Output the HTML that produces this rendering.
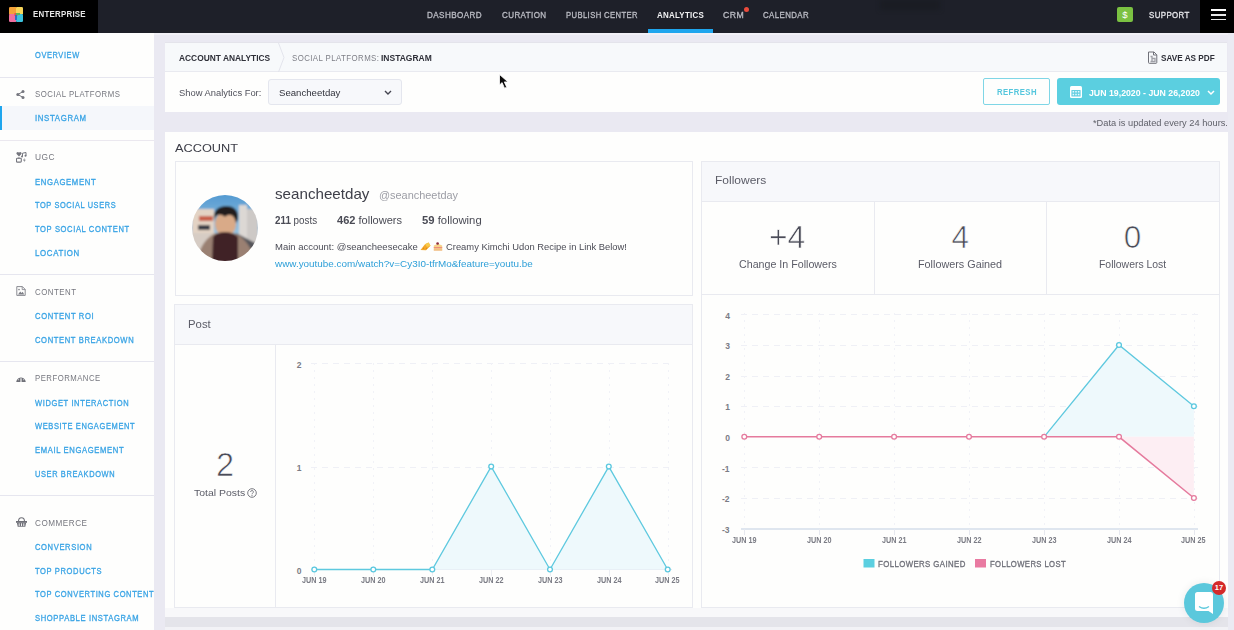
<!DOCTYPE html>
<html><head><meta charset="utf-8">
<style>
*{margin:0;padding:0;box-sizing:border-box}
html,body{width:1234px;height:630px;overflow:hidden;background:#eae9f2;font-family:"Liberation Sans",sans-serif}
.a{position:absolute}
.t{position:absolute;white-space:nowrap;transform-origin:0 0;font-family:"Liberation Sans",sans-serif}
.t b{font-weight:700}
</style></head><body>
<!-- top bar -->
<div class="a" style="left:0;top:0;width:1234px;height:33px;background:#1e2029"></div>
<div class="a" style="left:0;top:0;width:98px;height:33px;background:#000"></div>
<div class="a" style="left:1200px;top:0;width:34px;height:33px;background:#000"></div>
<!-- logo -->
<svg class="a" style="left:9px;top:7px" width="15" height="15" viewBox="0 0 15 15">
<rect x="0" y="0" width="8" height="8" rx="1.2" fill="#f4a23a"/>
<rect x="7" y="0" width="7" height="7.5" rx="1.2" fill="#f7d65a"/>
<rect x="0" y="7" width="7.5" height="8" rx="1.2" fill="#ef6fa0"/>
<rect x="7" y="7" width="7" height="8" rx="1.2" fill="#3cc3de"/>
<rect x="5.5" y="6" width="3" height="3" fill="#e2524b"/>
<rect x="7" y="6" width="4" height="2" fill="#57b957"/>
<rect x="6" y="8" width="2" height="5" fill="#2f6fc4"/>
</svg>
<!-- underline + red dot -->
<div class="a" style="left:648px;top:29px;width:65px;height:4px;background:#1fa6ee"></div>
<div class="a" style="left:744px;top:7px;width:5px;height:5px;border-radius:50%;background:#ea4b3c"></div>
<!-- green $ -->
<div class="a" style="left:1117px;top:7px;width:16px;height:15px;border-radius:2px;background:#7bc142;color:#fff;font-size:9.5px;line-height:15px;text-align:center;font-weight:400">$</div>
<!-- hamburger -->
<div class="a" style="left:1211px;top:9px;width:15px;height:2px;background:#fff"></div>
<div class="a" style="left:1211px;top:14px;width:15px;height:1.6px;background:#e8e8e8"></div>
<div class="a" style="left:1211px;top:18.6px;width:15px;height:1.6px;background:#e8e8e8"></div>

<!-- sidebar -->
<div class="a" style="left:0;top:33px;width:154px;height:597px;background:#fefefd"></div>
<div class="a" style="left:0;top:106px;width:154px;height:24px;background:#f5f7fb"></div>
<div class="a" style="left:0;top:106px;width:2px;height:24px;background:#1fa6ee"></div>
<div class="a" style="left:0;top:77px;width:154px;height:1px;background:#e6e6ef"></div>
<div class="a" style="left:0;top:140px;width:154px;height:1px;background:#ebe8ef"></div>
<div class="a" style="left:0;top:274px;width:154px;height:1px;background:#e6e6ef"></div>
<div class="a" style="left:0;top:361px;width:154px;height:1px;background:#e6e6ef"></div>
<div class="a" style="left:0;top:495px;width:154px;height:1px;background:#e6e6ef"></div>
<!-- sidebar icons -->
<svg class="a" style="left:16px;top:89.5px" width="9" height="9" viewBox="0 0 9 9">
<circle cx="1.8" cy="4.5" r="1.5" fill="#75767e"/><circle cx="7" cy="1.6" r="1.5" fill="#75767e"/><circle cx="7" cy="7.4" r="1.5" fill="#75767e"/>
<path d="M1.8 4.5L7 1.6M1.8 4.5L7 7.4" stroke="#75767e" stroke-width="1"/></svg>
<svg class="a" style="left:16px;top:151.5px" width="11" height="11" viewBox="0 0 11 11">
<path d="M3 4.5L.6 2.1A1.2 1.2 0 0 1 3 .8a1.2 1.2 0 0 1 2.4 1.3z" fill="#75767e"/>
<path d="M6.5 4.3V1.2L10 .5v3.2" fill="none" stroke="#75767e" stroke-width="1"/><circle cx="6" cy="4.4" r="1" fill="#75767e"/><circle cx="9.5" cy="3.7" r="1" fill="#75767e"/>
<rect x=".5" y="6.3" width="4.8" height="3.8" rx=".8" fill="none" stroke="#75767e" stroke-width="1.1"/><rect x="1.8" y="5.6" width="2" height="1" fill="#75767e"/>
<path d="M8.5 6L7 8.4h1.5L7.8 10.5 9.8 7.8H8.4z" fill="#75767e"/></svg>
<svg class="a" style="left:15.5px;top:285.5px" width="10" height="10" viewBox="0 0 10 10">
<path d="M.8.6h5.6L9.2 3.4v6H.8z" fill="none" stroke="#7d7e86" stroke-width=".9"/><path d="M6.2.6v3h3" fill="none" stroke="#7d7e86" stroke-width=".8"/>
<path d="M2 8.4l2.2-3 1.3 1.5 1.2-1.2 1.5 2.7z" fill="#7d7e86"/><circle cx="3" cy="3.6" r=".8" fill="#7d7e86"/></svg>
<svg class="a" style="left:16px;top:373.5px" width="10" height="8.5" viewBox="0 0 10 8.5">
<path d="M.2 8.3A4.8 4.8 0 0 1 9.8 8.3z" fill="#6f7078"/>
<path d="M5 8V4.2" stroke="#fff" stroke-width="1.1"/><path d="M2 5.4l.9.6M5 2.1v1M8 5.4l-.9.6M3.2 3l.5.7M6.8 3l-.5.7" stroke="#fff" stroke-width=".7"/></svg>
<svg class="a" style="left:16px;top:516.5px" width="11" height="10" viewBox="0 0 11 10">
<path d="M2.5 4.5C2.5 1.6 3.5 .8 5.5.8s3 .8 3 3.7" fill="none" stroke="#6f7078" stroke-width="1.1"/>
<rect x="0" y="4" width="11" height="1.8" fill="#6f7078"/><path d="M.9 5.8h9.2L9.3 9.8H1.7z" fill="#6f7078"/>
<path d="M3.2 6.3v2.8M5.5 6.3v2.8M7.8 6.3v2.8" stroke="#fff" stroke-width=".9"/></svg>

<!-- breadcrumb card -->
<div class="a" style="left:154px;top:33px;width:1080px;height:2px;background:#f1f0f6"></div>
<div class="a" style="left:165px;top:42px;width:1062px;height:1px;background:#e4e4eb"></div>
<div class="a" style="left:880px;top:0;width:60px;height:10px;background:#1a1c23;filter:blur(2px)"></div>
<div class="a" style="left:165px;top:43px;width:1062px;height:69px;background:#fefefd"></div>
<div class="a" style="left:165px;top:43px;width:1062px;height:28.5px;background:#f7f9fb;border-bottom:1px solid #e9eaf0"></div>
<svg class="a" style="left:277px;top:43px" width="10" height="29" viewBox="0 0 10 29"><path d="M1.5 0L7 14.5L1.5 29" fill="none" stroke="#e3e4ec" stroke-width="1"/></svg>
<!-- pdf icon -->
<svg class="a" style="left:1146.5px;top:50.5px" width="11" height="13" viewBox="0 0 11 13" fill="none" stroke="#707179" stroke-width="1">
<path d="M1.5 1h5.5l2.8 2.8V11.5a.8.8 0 0 1-.8.8H2.3a.8.8 0 0 1-.8-.8z"/><path d="M3.5 5.5h1.5v5M5 7.5h3v3H3.5" stroke-width="1.3" stroke="#9fa0a7"/><path d="M6.5 1v3h3.3"/></svg>
<!-- dropdown -->
<div class="a" style="left:268px;top:78.5px;width:134px;height:26px;background:#f7f8fb;border:1px solid #e4e6ee;border-radius:3px"></div>
<svg class="a" style="left:383.5px;top:89.5px" width="8" height="5" viewBox="0 0 8 5"><path d="M1 1l3 3 3-3" fill="none" stroke="#444550" stroke-width="1.4"/></svg>
<!-- refresh -->
<div class="a" style="left:983px;top:78px;width:67px;height:27px;border:1px solid #7fd6e6;border-radius:2px;background:#fefefd"></div>
<!-- date -->
<div class="a" style="left:1057px;top:78px;width:163px;height:27px;background:#5bcfe0;border-radius:3px"></div>
<svg class="a" style="left:1070px;top:86px" width="12" height="12" viewBox="0 0 12 12">
<rect x="0" y="0" width="12" height="12" rx="1.5" fill="#fff"/><rect x="1.4" y="4" width="9.2" height="6.6" rx=".6" fill="#64cfe1"/>
<g fill="#e8fbff"><rect x="2.6" y="5" width="1.5" height="1.5"/><rect x="5.25" y="5" width="1.5" height="1.5"/><rect x="7.9" y="5" width="1.5" height="1.5"/><rect x="2.6" y="7.8" width="1.5" height="1.5"/><rect x="5.25" y="7.8" width="1.5" height="1.5"/><rect x="7.9" y="7.8" width="1.5" height="1.5"/></g></svg>
<svg class="a" style="left:1206.5px;top:89.5px" width="8" height="6" viewBox="0 0 8 6"><path d="M1 1l3 3 3-3" fill="none" stroke="#fff" stroke-width="1.5"/></svg>

<!-- account card -->
<div class="a" style="left:165px;top:132px;width:1063px;height:485px;background:#fefefd"></div>
<div class="a" style="left:1228px;top:33px;width:6px;height:597px;background:#ebebf3"></div>
<!-- bottom band -->
<div class="a" style="left:165px;top:608px;width:1063px;height:9px;background:#f8f8fa"></div>
<div class="a" style="left:165px;top:617px;width:1063px;height:10px;background:#e4e4ea"></div>
<div class="a" style="left:165px;top:627px;width:1063px;height:3px;background:#f2f2f6"></div>
<!-- profile box -->
<div class="a" style="left:175px;top:161px;width:518px;height:135px;border:1px solid #e9eaf0"></div>
<!-- avatar -->
<svg class="a" style="left:192px;top:195px" width="66" height="66" viewBox="0 0 66 66">
<defs><clipPath id="cp"><circle cx="33" cy="33" r="33"/></clipPath>
<filter id="bl" x="-10%" y="-10%" width="120%" height="120%"><feGaussianBlur stdDeviation="1"/></filter><linearGradient id="sky" x1="0" y1="0" x2="0" y2="1"><stop offset="0" stop-color="#4f97d0"/><stop offset=".6" stop-color="#9cc6e2"/></linearGradient></defs>
<g clip-path="url(#cp)"><g filter="url(#bl)">
<rect x="-3" y="-3" width="72" height="72" fill="url(#sky)"/>
<rect x="0" y="14" width="22" height="40" fill="#e3d3c4"/>
<rect x="7" y="21" width="14" height="5" fill="#c8604c"/>
<rect x="6" y="30" width="12" height="5" fill="#3b3c46"/>
<rect x="-3" y="38" width="27" height="31" fill="#d6ccc4"/>
<rect x="47" y="10" width="8" height="40" fill="#dcd8d4"/>
<rect x="55" y="14" width="11" height="40" fill="#cdc9c6"/>
<path d="M44 38l25 13v18H44z" fill="#55545a"/>
<path d="M4 69c3-16 10-27 20-31h18c10 4 18 14 22 31z" fill="#9a8072"/>
<ellipse cx="33.5" cy="29" rx="10.5" ry="12" fill="#d9aa88"/>
<path d="M22 24c-1-10 6-13 12-13 8 0 13 4 12 13l-2 4c-1-5-3-8-6-8-4 0-5 2-5 2s-3-3-7-2c-3 1-4 4-4 7z" fill="#221b1e"/>
<path d="M21 42c3-4 8-5 12-5s9 1 13 5v26H20z" fill="#3f2226"/>
</g></g></svg>
<!-- emojis -->
<svg class="a" style="left:420px;top:241.5px" width="11" height="9" viewBox="0 0 11 9"><path d="M.5 8L5 2.2 8.6.6 10.5 3.8 6 8.2z" fill="#f3a72a"/><path d="M5 2.2L8.6.6 10.5 3.8 7 5z" fill="#f7c94a"/><circle cx="3.5" cy="6.3" r=".7" fill="#e08a12"/><circle cx="6.5" cy="6.5" r=".7" fill="#e08a12"/></svg>
<svg class="a" style="left:432.5px;top:242px" width="10" height="9" viewBox="0 0 10 9"><path d="M.8 3.5L5 1.8 9.2 3.5v5H.8z" fill="#f6d28a"/><path d="M.8 5h8.4v1.2H.8z" fill="#ef8f7c"/><path d="M.8 7.5h8.4v1H.8z" fill="#eeb07a"/><circle cx="4.6" cy="1.5" r="1.3" fill="#8c2a3a"/></svg>
<!-- followers panel -->
<div class="a" style="left:701px;top:161px;width:519px;height:447px;border:1px solid #e9eaf0;background:#fefefd"></div>
<div class="a" style="left:702px;top:162px;width:517px;height:40px;background:#f7f8fb;border-bottom:1px solid #e9eaf0"></div>
<div class="a" style="left:702px;top:294px;width:517px;height:1px;background:#e9eaf0"></div>
<div class="a" style="left:874px;top:202px;width:1px;height:92px;background:#e9eaf0"></div>
<div class="a" style="left:1046px;top:202px;width:1px;height:92px;background:#e9eaf0"></div>

<!-- post card -->
<div class="a" style="left:174px;top:304px;width:519px;height:304px;border:1px solid #e9eaf0;background:#fefefd"></div>
<div class="a" style="left:175px;top:305px;width:517px;height:40px;background:#f7f8fb;border-bottom:1px solid #e9eaf0"></div>
<div class="a" style="left:275px;top:345px;width:1px;height:262px;background:#e9eaf0"></div>
<svg class="a" style="left:246.5px;top:487.5px" width="10" height="10" viewBox="0 0 10 10"><circle cx="5" cy="5" r="4.3" fill="none" stroke="#6a6b74" stroke-width=".9"/><path d="M3.6 3.9a1.4 1.4 0 1 1 2 1.3c-.5.3-.6.5-.6 1.1" fill="none" stroke="#6a6b74" stroke-width=".9"/><circle cx="5" cy="7.6" r=".55" fill="#6a6b74"/></svg>

<!-- charts -->
<svg class="a" style="left:0;top:0" width="1234" height="630" viewBox="0 0 1234 630">
<g stroke="#eff0f6" stroke-width="1" stroke-dasharray="6 5" fill="none">
<path d="M311 363.5H672M311 467.5H672"/>
<path d="M741 314.5H1198M741 345.5H1198M741 376.5H1198M741 406.5H1198M741 467.5H1198M741 498.5H1198"/>
</g>
<g stroke="#f1f2f7" stroke-width="1" stroke-dasharray="2 5" fill="none">
<path d="M314.5 363V572M373.5 363V572M432.5 363V572M491.5 363V572M550.5 363V572M609.5 363V572M668.5 363V572"/>
<path d="M744.5 313V531M819.5 313V531M894.5 313V531M969.5 313V531M1044.5 313V531M1119.5 313V531M1194.5 313V531"/>
</g>
<path d="M311 569.5H672" stroke="#e3e7f0" stroke-width="1"/>
<path d="M741 529H1198" stroke="#dfe6ef" stroke-width="2"/>
<path d="M744.5 529V535M819.5 529V535M894.5 529V535M969.5 529V535M1044.5 529V535M1119.5 529V535M1194.5 529V535" stroke="#e6e8ef" stroke-width="1"/>
<path d="M314.5 570V576M373.5 570V576M432.5 570V576M491.5 570V576M550.5 570V576M609.5 570V576M668.5 570V576" stroke="#eceef3" stroke-width="1"/>
<!-- post area -->
<path d="M432.3 569.5L491.2 466.6L550 569.5L608.8 466.6L667.7 569.5Z" fill="#eef9fc"/>
<polyline points="314.3,569.5 373.3,569.5 432.3,569.5 491.2,466.6 550,569.5 608.8,466.6 667.7,569.5" fill="none" stroke="#5ec9df" stroke-width="1.3"/>
<g fill="#fff" stroke="#5bc8df" stroke-width="1.3">
<circle cx="314.3" cy="569.5" r="2.4"/><circle cx="373.3" cy="569.5" r="2.4"/><circle cx="432.3" cy="569.5" r="2.4"/><circle cx="491.2" cy="466.6" r="2.4"/><circle cx="550" cy="569.5" r="2.4"/><circle cx="608.8" cy="466.6" r="2.4"/><circle cx="667.7" cy="569.5" r="2.4"/></g>
<!-- follower areas -->
<path d="M1044.1 436.8L1119 345L1193.9 406.2V436.8Z" fill="#eef9fc"/>
<path d="M1119 436.8L1193.9 498V436.8Z" fill="#fdeef3"/>
<polyline points="1044.1,436.8 1119,345 1193.9,406.2" fill="none" stroke="#5ec9df" stroke-width="1.3"/>
<polyline points="744.3,436.8 819.2,436.8 894.1,436.8 969,436.8 1044.1,436.8 1119,436.8 1193.9,498" fill="none" stroke="#e57a9d" stroke-width="1.5"/>
<g fill="#fff" stroke="#5bc8df" stroke-width="1.3"><circle cx="1119" cy="345" r="2.4"/><circle cx="1193.9" cy="406.2" r="2.4"/></g>
<g fill="#fff" stroke="#e57a9d" stroke-width="1.3">
<circle cx="744.3" cy="436.8" r="2.4"/><circle cx="819.2" cy="436.8" r="2.4"/><circle cx="894.1" cy="436.8" r="2.4"/><circle cx="969" cy="436.8" r="2.4"/><circle cx="1044.1" cy="436.8" r="2.4"/><circle cx="1119" cy="436.8" r="2.4"/><circle cx="1193.9" cy="498" r="2.4"/></g>
<rect x="863.5" y="559" width="11" height="8.5" fill="#5bcfe0"/>
<rect x="975" y="559" width="11" height="8.5" fill="#e97aa1"/>
</svg>

<span class='t' style='left:32.7px;top:9.0px;font-size:9.6px;line-height:9.6px;font-weight:700;color:#e6e6e6;letter-spacing:0.3px;transform:scaleX(0.8222);'>ENTERPRISE</span>
<span class='t' style='left:427.3px;top:10.0px;font-size:9.5px;line-height:9.5px;font-weight:400;color:#b9bac2;letter-spacing:0.5px;transform:scaleX(0.8514);-webkit-text-stroke:0.35px currentColor;'>DASHBOARD</span>
<span class='t' style='left:501.5px;top:10.0px;font-size:9.5px;line-height:9.5px;font-weight:400;color:#b9bac2;letter-spacing:0.5px;transform:scaleX(0.8423);-webkit-text-stroke:0.35px currentColor;'>CURATION</span>
<span class='t' style='left:565.7px;top:10.0px;font-size:9.5px;line-height:9.5px;font-weight:400;color:#b9bac2;letter-spacing:0.5px;transform:scaleX(0.8059);-webkit-text-stroke:0.35px currentColor;'>PUBLISH CENTER</span>
<span class='t' style='left:656.8px;top:10.0px;font-size:9.5px;line-height:9.5px;font-weight:700;color:#f2f2f4;letter-spacing:0.3px;transform:scaleX(0.8360);'>ANALYTICS</span>
<span class='t' style='left:722.6px;top:10.0px;font-size:9.5px;line-height:9.5px;font-weight:400;color:#b9bac2;letter-spacing:0.5px;transform:scaleX(0.9141);-webkit-text-stroke:0.35px currentColor;'>CRM</span>
<span class='t' style='left:763.0px;top:10.0px;font-size:9.5px;line-height:9.5px;font-weight:400;color:#b9bac2;letter-spacing:0.5px;transform:scaleX(0.8258);-webkit-text-stroke:0.35px currentColor;'>CALENDAR</span>
<span class='t' style='left:1149.4px;top:10.0px;font-size:9.5px;line-height:9.5px;font-weight:400;color:#e4e4e8;letter-spacing:0.5px;transform:scaleX(0.8270);-webkit-text-stroke:0.35px currentColor;'>SUPPORT</span>
<span class='t' style='left:34.7px;top:89.0px;font-size:9.5px;line-height:9.5px;font-weight:400;color:#76777f;letter-spacing:0.6px;transform:scaleX(0.8206);'>SOCIAL PLATFORMS</span>
<span class='t' style='left:34.7px;top:152.0px;font-size:9.5px;line-height:9.5px;font-weight:400;color:#76777f;letter-spacing:0.6px;transform:scaleX(0.8812);'>UGC</span>
<span class='t' style='left:34.7px;top:287.0px;font-size:9.5px;line-height:9.5px;font-weight:400;color:#76777f;letter-spacing:0.6px;transform:scaleX(0.8285);'>CONTENT</span>
<span class='t' style='left:34.7px;top:373.0px;font-size:9.5px;line-height:9.5px;font-weight:400;color:#76777f;letter-spacing:0.6px;transform:scaleX(0.8163);'>PERFORMANCE</span>
<span class='t' style='left:34.7px;top:518.0px;font-size:9.5px;line-height:9.5px;font-weight:400;color:#76777f;letter-spacing:0.6px;transform:scaleX(0.8578);'>COMMERCE</span>
<span class='t' style='left:34.7px;top:50.0px;font-size:9.5px;line-height:9.5px;font-weight:400;color:#3aa4e5;letter-spacing:0.8px;transform:scaleX(0.7803);-webkit-text-stroke:0.35px currentColor;'>OVERVIEW</span>
<span class='t' style='left:34.7px;top:113.0px;font-size:9.5px;line-height:9.5px;font-weight:400;color:#3aa4e5;letter-spacing:0.8px;transform:scaleX(0.8205);-webkit-text-stroke:0.35px currentColor;'>INSTAGRAM</span>
<span class='t' style='left:34.7px;top:177.0px;font-size:9.5px;line-height:9.5px;font-weight:400;color:#3aa4e5;letter-spacing:0.8px;transform:scaleX(0.8108);-webkit-text-stroke:0.35px currentColor;'>ENGAGEMENT</span>
<span class='t' style='left:34.7px;top:200.0px;font-size:9.5px;line-height:9.5px;font-weight:400;color:#3aa4e5;letter-spacing:0.8px;transform:scaleX(0.7772);-webkit-text-stroke:0.35px currentColor;'>TOP SOCIAL USERS</span>
<span class='t' style='left:34.7px;top:224.0px;font-size:9.5px;line-height:9.5px;font-weight:400;color:#3aa4e5;letter-spacing:0.8px;transform:scaleX(0.7951);-webkit-text-stroke:0.35px currentColor;'>TOP SOCIAL CONTENT</span>
<span class='t' style='left:34.7px;top:248.0px;font-size:9.5px;line-height:9.5px;font-weight:400;color:#3aa4e5;letter-spacing:0.8px;transform:scaleX(0.8272);-webkit-text-stroke:0.35px currentColor;'>LOCATION</span>
<span class='t' style='left:34.7px;top:311.0px;font-size:9.5px;line-height:9.5px;font-weight:400;color:#3aa4e5;letter-spacing:0.8px;transform:scaleX(0.7998);-webkit-text-stroke:0.35px currentColor;'>CONTENT ROI</span>
<span class='t' style='left:34.7px;top:335.0px;font-size:9.5px;line-height:9.5px;font-weight:400;color:#3aa4e5;letter-spacing:0.8px;transform:scaleX(0.7987);-webkit-text-stroke:0.35px currentColor;'>CONTENT BREAKDOWN</span>
<span class='t' style='left:34.7px;top:398.0px;font-size:9.5px;line-height:9.5px;font-weight:400;color:#3aa4e5;letter-spacing:0.8px;transform:scaleX(0.7901);-webkit-text-stroke:0.35px currentColor;'>WIDGET INTERACTION</span>
<span class='t' style='left:34.7px;top:421.0px;font-size:9.5px;line-height:9.5px;font-weight:400;color:#3aa4e5;letter-spacing:0.8px;transform:scaleX(0.7870);-webkit-text-stroke:0.35px currentColor;'>WEBSITE ENGAGEMENT</span>
<span class='t' style='left:34.7px;top:445.0px;font-size:9.5px;line-height:9.5px;font-weight:400;color:#3aa4e5;letter-spacing:0.8px;transform:scaleX(0.8028);-webkit-text-stroke:0.35px currentColor;'>EMAIL ENGAGEMENT</span>
<span class='t' style='left:34.7px;top:469.0px;font-size:9.5px;line-height:9.5px;font-weight:400;color:#3aa4e5;letter-spacing:0.8px;transform:scaleX(0.7824);-webkit-text-stroke:0.35px currentColor;'>USER BREAKDOWN</span>
<span class='t' style='left:34.7px;top:542.0px;font-size:9.5px;line-height:9.5px;font-weight:400;color:#3aa4e5;letter-spacing:0.8px;transform:scaleX(0.7964);-webkit-text-stroke:0.35px currentColor;'>CONVERSION</span>
<span class='t' style='left:34.7px;top:566.0px;font-size:9.5px;line-height:9.5px;font-weight:400;color:#3aa4e5;letter-spacing:0.8px;transform:scaleX(0.7935);-webkit-text-stroke:0.35px currentColor;'>TOP PRODUCTS</span>
<span class='t' style='left:34.7px;top:589.0px;font-size:9.5px;line-height:9.5px;font-weight:400;color:#3aa4e5;letter-spacing:0.8px;transform:scaleX(0.7888);-webkit-text-stroke:0.35px currentColor;'>TOP CONVERTING CONTENT</span>
<span class='t' style='left:34.7px;top:613.0px;font-size:9.5px;line-height:9.5px;font-weight:400;color:#3aa4e5;letter-spacing:0.8px;transform:scaleX(0.7990);-webkit-text-stroke:0.35px currentColor;'>SHOPPABLE INSTAGRAM</span>
<span class='t' style='left:179.3px;top:53.0px;font-size:9.5px;line-height:9.5px;font-weight:700;color:#2e2f38;letter-spacing:0px;transform:scaleX(0.8827);'>ACCOUNT ANALYTICS</span>
<span class='t' style='left:291.5px;top:53.0px;font-size:9.5px;line-height:9.5px;font-weight:400;color:#7e7f87;letter-spacing:0.5px;transform:scaleX(0.8268);'>SOCIAL PLATFORMS:</span>
<span class='t' style='left:381.0px;top:53.0px;font-size:9.5px;line-height:9.5px;font-weight:700;color:#2e2f38;letter-spacing:0px;transform:scaleX(0.8936);'>INSTAGRAM</span>
<span class='t' style='left:1160.7px;top:53.0px;font-size:9.5px;line-height:9.5px;font-weight:700;color:#2e2f38;letter-spacing:0px;transform:scaleX(0.8613);'>SAVE AS PDF</span>
<span class='t' style='left:179.2px;top:89.0px;font-size:8.5px;line-height:8.5px;font-weight:400;color:#50515b;letter-spacing:0px;transform:scaleX(1.1033);'>Show Analytics For:</span>
<span class='t' style='left:279.2px;top:89.0px;font-size:8.6px;line-height:8.6px;font-weight:400;color:#31323b;letter-spacing:0px;transform:scaleX(1.1167);'>Seancheetday</span>
<span class='t' style='left:996.8px;top:87.0px;font-size:9.5px;line-height:9.5px;font-weight:700;color:#55c6dd;letter-spacing:0.5px;transform:scaleX(0.8164);'>REFRESH</span>
<span class='t' style='left:1089.1px;top:88.0px;font-size:9.5px;line-height:9.5px;font-weight:700;color:#ffffff;letter-spacing:0px;transform:scaleX(0.9218);'>JUN 19,2020 - JUN 26,2020</span>
<span class='t' style='left:1092.8px;top:119.0px;font-size:9px;line-height:9px;font-weight:400;color:#60616a;letter-spacing:0px;transform:scaleX(1.0293);'>*Data is updated every 24 hours.</span>
<span class='t' style='left:174.9px;top:143.0px;font-size:11.2px;line-height:11.2px;font-weight:400;color:#3c3d47;letter-spacing:0px;transform:scaleX(1.1390);'>ACCOUNT</span>
<span class='t' style='left:275.0px;top:186.0px;font-size:15px;line-height:15px;font-weight:400;color:#3f404a;letter-spacing:0px;transform:scaleX(1.0108);'>seancheetday</span>
<span class='t' style='left:379.0px;top:190.0px;font-size:10.5px;line-height:10.5px;font-weight:400;color:#9c9da5;letter-spacing:0px;transform:scaleX(1.0398);'>@seancheetday</span>
<span class='t' style='left:275.2px;top:216.0px;font-size:10px;line-height:10px;font-weight:400;color:#4a4b55;letter-spacing:0px;transform:scaleX(0.9827);'><b>211</b> posts</span>
<span class='t' style='left:337.4px;top:216.0px;font-size:10px;line-height:10px;font-weight:400;color:#4a4b55;letter-spacing:0px;transform:scaleX(1.1043);'><b>462</b> followers</span>
<span class='t' style='left:422.4px;top:216.0px;font-size:10px;line-height:10px;font-weight:400;color:#4a4b55;letter-spacing:0px;transform:scaleX(1.1302);'><b>59</b> following</span>
<span class='t' style='left:275.0px;top:243.0px;font-size:8.6px;line-height:8.6px;font-weight:400;color:#4b4c56;letter-spacing:0px;transform:scaleX(1.1056);'>Main account: @seancheesecake</span>
<span class='t' style='left:445.6px;top:243.0px;font-size:8.6px;line-height:8.6px;font-weight:400;color:#4b4c56;letter-spacing:0px;transform:scaleX(1.0917);'>Creamy Kimchi Udon Recipe in Link Below!</span>
<span class='t' style='left:275.0px;top:260.0px;font-size:8.6px;line-height:8.6px;font-weight:400;color:#2d9fd8;letter-spacing:0px;transform:scaleX(1.1507);'>www.youtube.com/watch?v=Cy3I0-tfrMo&amp;feature=youtu.be</span>
<span class='t' style='left:715.1px;top:175.0px;font-size:11px;line-height:11px;font-weight:400;color:#5b5c67;letter-spacing:0px;transform:scaleX(1.0910);'>Followers</span>
<span class='t' style='left:769.4px;top:222.0px;font-size:31.5px;line-height:31.5px;font-weight:400;color:#4b4c58;letter-spacing:0px;transform:scaleX(1.0089);-webkit-text-stroke:0.7px #fefefd;'>+4</span>
<span class='t' style='left:951.6px;top:222.0px;font-size:31.5px;line-height:31.5px;font-weight:400;color:#4b4c58;letter-spacing:0px;-webkit-text-stroke:0.7px #fefefd;'>4</span>
<span class='t' style='left:1123.7px;top:222.0px;font-size:31.5px;line-height:31.5px;font-weight:400;color:#4b4c58;letter-spacing:0px;-webkit-text-stroke:0.7px #fefefd;'>0</span>
<span class='t' style='left:738.6px;top:259.0px;font-size:10.5px;line-height:10.5px;font-weight:400;color:#5b5c67;letter-spacing:0px;transform:scaleX(1.0160);'>Change In Followers</span>
<span class='t' style='left:918.3px;top:259.0px;font-size:10.5px;line-height:10.5px;font-weight:400;color:#5b5c67;letter-spacing:0px;transform:scaleX(1.0289);'>Followers Gained</span>
<span class='t' style='left:1099.2px;top:259.0px;font-size:10.5px;line-height:10.5px;font-weight:400;color:#5b5c67;letter-spacing:0px;transform:scaleX(0.9931);'>Followers Lost</span>
<span class='t' style='left:188.3px;top:319.0px;font-size:11px;line-height:11px;font-weight:400;color:#5b5c67;letter-spacing:0px;transform:scaleX(1.0314);'>Post</span>
<span class='t' style='left:216.0px;top:449.0px;font-size:32.5px;line-height:32.5px;font-weight:400;color:#4b4c58;letter-spacing:0px;-webkit-text-stroke:0.7px #fefefd;'>2</span>
<span class='t' style='left:193.5px;top:488.0px;font-size:9.8px;line-height:9.8px;font-weight:400;color:#5b5c67;letter-spacing:0px;transform:scaleX(1.0671);'>Total Posts</span>
<span class='t' style='left:302.0px;top:576.0px;font-size:8.5px;line-height:8.5px;font-weight:700;color:#7b7c85;letter-spacing:0px;transform:scaleX(0.8526);'>JUN 19</span>
<span class='t' style='left:361.0px;top:576.0px;font-size:8.5px;line-height:8.5px;font-weight:700;color:#7b7c85;letter-spacing:0px;transform:scaleX(0.8526);'>JUN 20</span>
<span class='t' style='left:420.0px;top:576.0px;font-size:8.5px;line-height:8.5px;font-weight:700;color:#7b7c85;letter-spacing:0px;transform:scaleX(0.8526);'>JUN 21</span>
<span class='t' style='left:478.9px;top:576.0px;font-size:8.5px;line-height:8.5px;font-weight:700;color:#7b7c85;letter-spacing:0px;transform:scaleX(0.8526);'>JUN 22</span>
<span class='t' style='left:537.7px;top:576.0px;font-size:8.5px;line-height:8.5px;font-weight:700;color:#7b7c85;letter-spacing:0px;transform:scaleX(0.8526);'>JUN 23</span>
<span class='t' style='left:596.5px;top:576.0px;font-size:8.5px;line-height:8.5px;font-weight:700;color:#7b7c85;letter-spacing:0px;transform:scaleX(0.8526);'>JUN 24</span>
<span class='t' style='left:655.4px;top:576.0px;font-size:8.5px;line-height:8.5px;font-weight:700;color:#7b7c85;letter-spacing:0px;transform:scaleX(0.8526);'>JUN 25</span>
<span class='t' style='left:296.8px;top:361.0px;font-size:8.5px;line-height:8.5px;font-weight:700;color:#7b7c85;letter-spacing:0px;'>2</span>
<span class='t' style='left:296.8px;top:464.0px;font-size:8.5px;line-height:8.5px;font-weight:700;color:#7b7c85;letter-spacing:0px;'>1</span>
<span class='t' style='left:296.8px;top:567.0px;font-size:8.5px;line-height:8.5px;font-weight:700;color:#7b7c85;letter-spacing:0px;'>0</span>
<span class='t' style='left:732.0px;top:536.0px;font-size:8.5px;line-height:8.5px;font-weight:700;color:#7b7c85;letter-spacing:0px;transform:scaleX(0.8526);'>JUN 19</span>
<span class='t' style='left:806.9px;top:536.0px;font-size:8.5px;line-height:8.5px;font-weight:700;color:#7b7c85;letter-spacing:0px;transform:scaleX(0.8526);'>JUN 20</span>
<span class='t' style='left:881.8px;top:536.0px;font-size:8.5px;line-height:8.5px;font-weight:700;color:#7b7c85;letter-spacing:0px;transform:scaleX(0.8526);'>JUN 21</span>
<span class='t' style='left:956.7px;top:536.0px;font-size:8.5px;line-height:8.5px;font-weight:700;color:#7b7c85;letter-spacing:0px;transform:scaleX(0.8526);'>JUN 22</span>
<span class='t' style='left:1031.6px;top:536.0px;font-size:8.5px;line-height:8.5px;font-weight:700;color:#7b7c85;letter-spacing:0px;transform:scaleX(0.8526);'>JUN 23</span>
<span class='t' style='left:1106.5px;top:536.0px;font-size:8.5px;line-height:8.5px;font-weight:700;color:#7b7c85;letter-spacing:0px;transform:scaleX(0.8526);'>JUN 24</span>
<span class='t' style='left:1181.4px;top:536.0px;font-size:8.5px;line-height:8.5px;font-weight:700;color:#7b7c85;letter-spacing:0px;transform:scaleX(0.8526);'>JUN 25</span>
<span class='t' style='left:725.3px;top:312.0px;font-size:8.5px;line-height:8.5px;font-weight:700;color:#7b7c85;letter-spacing:0px;'>4</span>
<span class='t' style='left:725.3px;top:342.0px;font-size:8.5px;line-height:8.5px;font-weight:700;color:#7b7c85;letter-spacing:0px;'>3</span>
<span class='t' style='left:725.3px;top:373.0px;font-size:8.5px;line-height:8.5px;font-weight:700;color:#7b7c85;letter-spacing:0px;'>2</span>
<span class='t' style='left:725.3px;top:403.0px;font-size:8.5px;line-height:8.5px;font-weight:700;color:#7b7c85;letter-spacing:0px;'>1</span>
<span class='t' style='left:725.3px;top:434.0px;font-size:8.5px;line-height:8.5px;font-weight:700;color:#7b7c85;letter-spacing:0px;'>0</span>
<span class='t' style='left:722.0px;top:465.0px;font-size:8.5px;line-height:8.5px;font-weight:700;color:#7b7c85;letter-spacing:0px;'>-1</span>
<span class='t' style='left:722.0px;top:495.0px;font-size:8.5px;line-height:8.5px;font-weight:700;color:#7b7c85;letter-spacing:0px;'>-2</span>
<span class='t' style='left:722.0px;top:526.0px;font-size:8.5px;line-height:8.5px;font-weight:700;color:#7b7c85;letter-spacing:0px;'>-3</span>
<span class='t' style='left:878.0px;top:559.0px;font-size:9.5px;line-height:9.5px;font-weight:400;color:#6f7079;letter-spacing:0.5px;transform:scaleX(0.8221);-webkit-text-stroke:0.35px currentColor;'>FOLLOWERS GAINED</span>
<span class='t' style='left:989.5px;top:559.0px;font-size:9.5px;line-height:9.5px;font-weight:400;color:#6f7079;letter-spacing:0.5px;transform:scaleX(0.8088);-webkit-text-stroke:0.35px currentColor;'>FOLLOWERS LOST</span>

<!-- mouse cursor -->
<svg class="a" style="left:498px;top:73px" width="14" height="18" viewBox="0 0 14 18"><path d="M1.5 1.5V12l2.6-2.4 2.4 5.6 2.2-1-2.4-5.3H10z" fill="#0c0c0c" stroke="#fff" stroke-width=".8" stroke-linejoin="round"/></svg>
<!-- chat -->
<div class="a" style="left:1184px;top:583px;width:40px;height:40px;border-radius:50%;background:#5bc8dc;box-shadow:0 0 8px rgba(0,0,0,.08)"></div>
<svg class="a" style="left:1193px;top:590px" width="22" height="26" viewBox="0 0 22 26"><path d="M2 4.5A2.5 2.5 0 0 1 4.5 2h13A2.5 2.5 0 0 1 20 4.5V24l-4.5-3H4.5A2.5 2.5 0 0 1 2 18.5z" fill="#fff"/><path d="M6 16.5q5 3.5 10 0" fill="none" stroke="#5bc8dc" stroke-width="1.3"/></svg>
<div class="a" style="left:1212px;top:581px;width:14px;height:14px;border-radius:50%;background:#d42a2a;color:#fff;font-size:7.5px;line-height:14px;text-align:center;font-weight:700">17</div>
</body></html>
